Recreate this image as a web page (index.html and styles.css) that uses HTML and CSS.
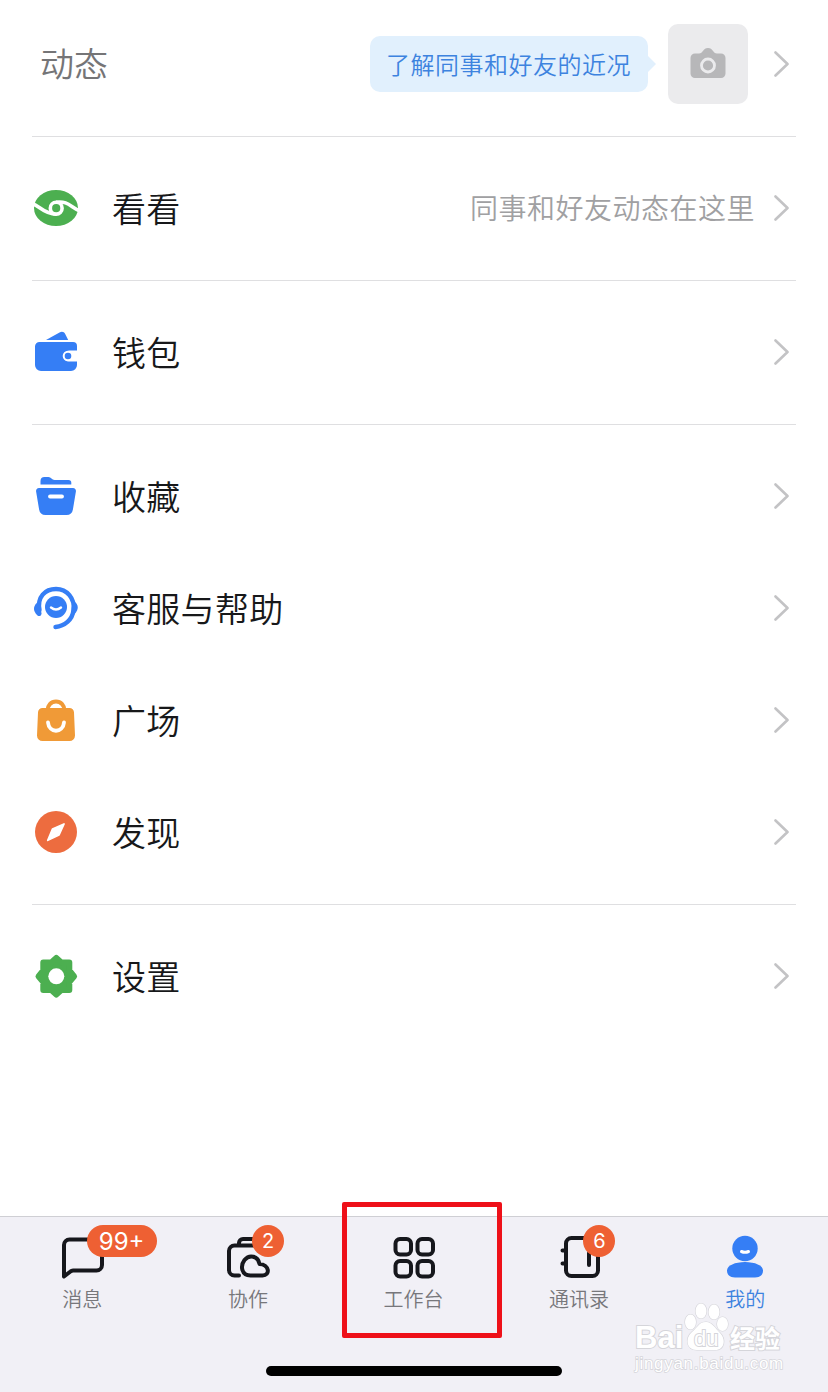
FILE: index.html
```html
<!DOCTYPE html>
<html lang="zh-CN">
<head>
    <meta charset="UTF-8">
    <meta name="viewport" content="width=device-width, initial-scale=1.0">
    <link rel="stylesheet" href="styles.css">
    <title>我的</title>
</head>
<body>
    <svg class="defs" width="0" height="0">
        <symbol id="arrow" viewBox="0 0 16 28"><path d="M1.500 2.500 13.500 14 1.500 25.500" fill="none" stroke="#c3c3c5" stroke-width="2.600" stroke-linecap="round" stroke-linejoin="round"/></symbol>
    </svg>

    <main>
        <section class="group first">
            <div class="row">
                <span class="heading">动态</span>
                <span class="bubble">了解同事和好友的近况</span>
                <span class="camera">
                    <svg width="36" height="32" viewBox="0 0 36 32">
                        <path d="M5 5.500h4c4 0 4-5.500 9-5.500s5 5.500 9 5.500h4a4.500 4.500 0 0 1 4.500 4.500v15.500a4.500 4.500 0 0 1-4.500 4.500H5A4.500 4.500 0 0 1 .5 25.500V10A4.500 4.500 0 0 1 5 5.500z" fill="#b7b7b9"/>
                        <circle cx="18" cy="17.500" r="6.500" fill="none" stroke="#ebebed" stroke-width="2.800"/>
                    </svg>
                </span>
                <svg class="arrow"><use href="#arrow"/></svg>
            </div>
        </section>

        <section class="group">
            <div class="row">
                <svg class="icon" viewBox="0 0 48 48">
                    <ellipse cx="24" cy="24" rx="22" ry="18" fill="#4caf50"/>
                    <path d="M0 19.500C8 22 12 30.200 24.200 30.200" fill="none" stroke="#fff" stroke-width="3.600"/>
                    <path d="M24.200 18.200C36 16.500 39 23.500 48 27" fill="none" stroke="#fff" stroke-width="3.600"/>
                    <circle cx="24.200" cy="24.200" r="5.900" fill="#4caf50" stroke="#fff" stroke-width="3.600"/>
                </svg>
                <span class="label">看看</span>
                <span class="note">同事和好友动态在这里</span>
                <svg class="arrow"><use href="#arrow"/></svg>
            </div>
        </section>

        <section class="group">
            <div class="row">
                <svg class="icon" viewBox="0 0 48 48">
                    <path d="M14 12 27.500 4.500c2.500-1.200 4.500-.7 5.700 1.500l3 6z" fill="#357ef5"/>
                    <path d="M7.500 14H41a4 4 0 0 1 4 4v4.500h-7.500a5.500 5.500 0 0 0 0 11H45V37a6 6 0 0 1-6 6H9a6 6 0 0 1-6-6V18.500A4.500 4.500 0 0 1 7.500 14z" fill="#357ef5"/>
                    <circle cx="36" cy="28" r="4.300" fill="#357ef5" stroke="#fff" stroke-width="2"/>
                </svg>
                <span class="label">钱包</span>
                <svg class="arrow"><use href="#arrow"/></svg>
            </div>
        </section>

        <section class="group">
            <div class="row">
                <svg class="icon" viewBox="0 0 48 48">
                    <path d="M8.500 12.500V9a4 4 0 0 1 4-4h4c2.500 0 3.500 3 6 3h14a2.800 2.800 0 0 1 2.800 2.800v1.700z" fill="#357ef5"/>
                    <path d="M7 16h34a3 3 0 0 1 2.900 3.500l-3 18a6.500 6.500 0 0 1-6.400 5.500H13.500a6.500 6.500 0 0 1-6.400-5.500l-3-18A3 3 0 0 1 7 16z" fill="#357ef5"/>
                    <path d="M18 24.500h12" stroke="#fff" stroke-width="3.800" stroke-linecap="round"/>
                </svg>
                <span class="label">收藏</span>
                <svg class="arrow"><use href="#arrow"/></svg>
            </div>
            <div class="row">
                <svg class="icon" viewBox="0 0 48 48">
                    <circle cx="24" cy="23" r="11" fill="#357ef5"/>
                    <path d="M19 23.500q5 4 10 0" fill="none" stroke="#fff" stroke-width="2.400" stroke-linecap="round"/>
                    <path d="M7.500 26C5 13 13 5 24 5s19 9.500 17.500 21c-1 10-9 16-18 17" fill="none" stroke="#357ef5" stroke-width="4.400" stroke-linecap="round"/>
                    <path d="M7.500 16.500c-7 5-7 10-2 15 1.500 1.200 4 .5 4-2z" fill="#357ef5"/>
                    <path d="M40.500 16c7.500 4.500 7 11-1.500 17z" fill="#357ef5"/>
                </svg>
                <span class="label">客服与帮助</span>
                <svg class="arrow"><use href="#arrow"/></svg>
            </div>
            <div class="row">
                <svg class="icon" viewBox="0 0 48 48">
                    <path d="M15.500 14.500c0-5 3.500-9 8.500-9s8.500 4 8.500 9" fill="none" stroke="#f09a37" stroke-width="4"/>
                    <path d="M10.500 12h27a4.500 4.500 0 0 1 4.500 4.500l1 23a5.500 5.500 0 0 1-5.500 5.500h-27A5.500 5.500 0 0 1 5 39.500l1-23a4.500 4.500 0 0 1 4.500-4.500z" fill="#f09a37"/>
                    <path d="M16 26.500c1 11 15 11 16 0" fill="none" stroke="#fff" stroke-width="3.800" stroke-linecap="round"/>
                </svg>
                <span class="label">广场</span>
                <svg class="arrow"><use href="#arrow"/></svg>
            </div>
            <div class="row">
                <svg class="icon" viewBox="0 0 48 48">
                    <circle cx="24" cy="24" r="21" fill="#ed6c3f"/>
                    <path d="m32 16-5 11-11.200 5.300L20.500 21z" fill="#fff" stroke="#fff" stroke-width="1.800" stroke-linejoin="round"/>
                </svg>
                <span class="label">发现</span>
                <svg class="arrow"><use href="#arrow"/></svg>
            </div>
        </section>

        <section class="group last">
            <div class="row">
                <svg class="icon" viewBox="0 0 48 48">
                    <path d="m24.300 6 5 4.500h8v8l4.800 5.800-4.800 5.800v8h-8l-5 4.500-5-4.500h-8v-8l-4.800-5.800 4.800-5.800v-8h8z" fill="#4caf50" stroke="#4caf50" stroke-width="6" stroke-linejoin="round"/>
                    <circle cx="24.300" cy="24.300" r="8" fill="#fff"/>
                </svg>
                <span class="label">设置</span>
                <svg class="arrow"><use href="#arrow"/></svg>
            </div>
        </section>
    </main>

    <nav>
        <a class="tab">
            <svg class="tab-icon" viewBox="0 0 48 48">
                <path d="M5 43.500V12A5.500 5.500 0 0 1 10.500 6.500H38a5 5 0 0 1 5 5V32a5.500 5.500 0 0 1-5.500 5.500H14q-1.500 0-2.500 1z"/>
            </svg>
            <span>消息</span>
            <b class="badge wide">99+</b>
        </a>
        <a class="tab">
            <svg class="tab-icon" viewBox="0 0 48 48">
                <path d="M15 42.500h-4.500A5.500 5.500 0 0 1 5 37V18A5.500 5.500 0 0 1 10.500 12.500H38M15 12V10A4 4 0 0 1 19 6H32"/>
                <path d="M26.500 42.500c-9 0-10.500-9.500-6-15.500 5-6 13.500-4 15 4 10 .5 11 11.500 3 11.500z"/>
            </svg>
            <span>协作</span>
            <b class="badge">2</b>
        </a>
        <a class="tab active-box">
            <svg class="tab-icon" viewBox="0 0 48 48">
                <rect x="5.500" y="6" width="15.500" height="15.500" rx="4.500"/>
                <rect x="27.500" y="6" width="15.500" height="15.500" rx="4.500"/>
                <rect x="5.500" y="28" width="15.500" height="15.500" rx="4.500"/>
                <rect x="27.500" y="28" width="15.500" height="15.500" rx="4.500"/>
            </svg>
            <span>工作台</span>
        </a>
        <a class="tab">
            <svg class="tab-icon" viewBox="0 0 48 48">
                <rect x="10" y="5" width="32" height="38" rx="5.500"/>
                <path d="M6.500 17.500h3.500M6.500 30.500h3.500M33 20v12"/>
            </svg>
            <span>通讯录</span>
            <b class="badge">6</b>
        </a>
        <a class="tab mine">
            <svg class="tab-icon" viewBox="0 0 48 48">
                <circle cx="24" cy="15.500" r="12.700"/>
                <path d="M6 37.500C6 32.500 14 29 24 29s18 3.500 18 8.500c0 4-2.500 7-8 7H14c-5.500 0-8-3-8-7z"/>
                <path class="smile" d="M20.500 18.500q3.500 1.500 7 0"/>
            </svg>
            <span>我的</span>
        </a>
        <i class="home-bar"></i>
    </nav>

    <div class="watermark">
        <div class="brand">
            <span class="bai">Bai</span>
            <span class="paw">
                <svg width="46" height="50" viewBox="0 0 46 50">
                    <ellipse cx="6.500" cy="20" rx="5.500" ry="7.500"/>
                    <ellipse cx="17" cy="9" rx="5.500" ry="7.500"/>
                    <ellipse cx="30" cy="10" rx="5.500" ry="7.500"/>
                    <ellipse cx="38.500" cy="22" rx="5.500" ry="7"/>
                    <path d="M22 20c6 0 9 6 14 11 6 6 5 17-5 17H13C2 48 1 36 8 30c6-5 7-10 14-10z"/>
                </svg>
                <em>du</em>
            </span>
            <span class="jy">经验</span>
        </div>
        <div class="url">jingyan.baidu.com</div>
    </div>
</body>
</html>
```
FILE: styles.css
```css
*{ box-sizing: border-box; }
body{ margin: 0; height: 1392px; position: relative; display: flex; flex-direction: column; overflow: hidden; background-color: #fff; font-family: "Noto Sans CJK SC", sans-serif; }
.defs{ position: absolute; }
main{ flex: 1; padding: 0 32px; }

.group{ padding: 15px 0 16px; border-bottom: 1px solid #dfdfe1; }
.first{ padding-top: 8px; }
.last{ border-bottom: none; }
.row{ height: 112px; display: flex; align-items: center; padding-right: 6px; }
.icon{ width: 48px; height: 48px; margin-right: 32px; flex: none; }
.arrow{ width: 16px; height: 28px; margin-left: auto; flex: none; }
.label{ margin-bottom: 1px; font-size: 34px; line-height: 48px; letter-spacing: 0.3px; color: #17181a; font-weight: 350; }
.note{ margin-left: auto; margin-bottom: 2px; font-size: 28px; line-height: 40px; letter-spacing: 0.5px; color: #a0a0a2; font-weight: 350; }
.note + .arrow{ margin-left: 19px; }

.heading{ margin-left: 8px; margin-bottom: 2px; font-size: 34px; line-height: 48px; color: #757577; font-weight: 350; }
.bubble{ position: relative; width: 278px; height: 56px; margin-left: auto; margin-right: 20px; padding-left: 16px; border-radius: 10px; background-color: #e1f0fd; color: #3d83df; font-size: 24px; line-height: 56px; letter-spacing: 0.5px; white-space: nowrap; font-weight: 350; }
.bubble::after{ content: ""; position: absolute; left: 278px; top: 20px; border: 8px solid transparent; border-left-color: #e1f0fd; border-right: none; }
.camera{ width: 80px; height: 80px; border-radius: 10px; background-color: #ebebed; display: flex; align-items: center; justify-content: center; }
.camera + .arrow{ margin-left: 26px; }

nav{ position: relative; height: 176px; display: grid; grid-template-columns: repeat(5, 1fr); background-color: #f1f0f6; border-top: 1px solid #cfcfd4; }
.tab{ position: relative; display: flex; flex-direction: column; align-items: center; padding-top: 16px; font-size: 20px; line-height: 28px; color: #77777b; font-weight: 350; }
.tab span{ margin-top: 4px; margin-right: 1px; }
.tab-icon{ width: 48px; height: 48px; flex: none; fill: none; stroke: #16171c; stroke-width: 4; stroke-linecap: round; stroke-linejoin: round; }
.mine{ color: #3d83df; }
.mine span{ margin-right: 0; }
.mine .tab-icon{ fill: #357ef5; stroke: none; }
.mine .smile{ fill: none; stroke: #fff; stroke-width: 3; }
.badge{ position: absolute; left: 86.6px; top: 8px; width: 32px; height: 32px; border-radius: 16px; background-color: #ee6033; color: #fff; font: 400 20px/32px Inter, sans-serif; text-align: center; }
.wide{ width: 70px; font-size: 24px; line-height: 34px; }
.active-box::after{ content: ""; position: absolute; left: 11px; top: -15px; width: 150px; height: 126px; border: 5px solid #ee1019; border-radius: 2px; }
.home-bar{ position: absolute; left: 266px; bottom: 16px; width: 296px; height: 10px; border-radius: 5px; background-color: #000; }

/* site watermark */
.watermark{ position: absolute; left: 635px; top: 1302px; width: 150px; color: #fff; -webkit-text-stroke: 2px #d5d5da; paint-order: stroke fill; }
.brand{ display: flex; align-items: flex-end; height: 52px; font-weight: 700; }
.bai{ width: 49px; font: 700 31px/32px "Liberation Sans", sans-serif; }
.paw{ position: relative; width: 46px; height: 50px; margin-bottom: 2px; }
.paw svg{ fill: #fff; stroke: #d5d5da; stroke-width: 1.2; }
.paw em{ position: absolute; left: 10px; bottom: 1px; font: 400 22px/24px "Liberation Sans", sans-serif; }
.jy{ font-size: 25px; line-height: 33px; }
.url{ font: 17px/20px "Liberation Sans", sans-serif; letter-spacing: 0.7px; -webkit-text-stroke-width: 1.5px; }
```
